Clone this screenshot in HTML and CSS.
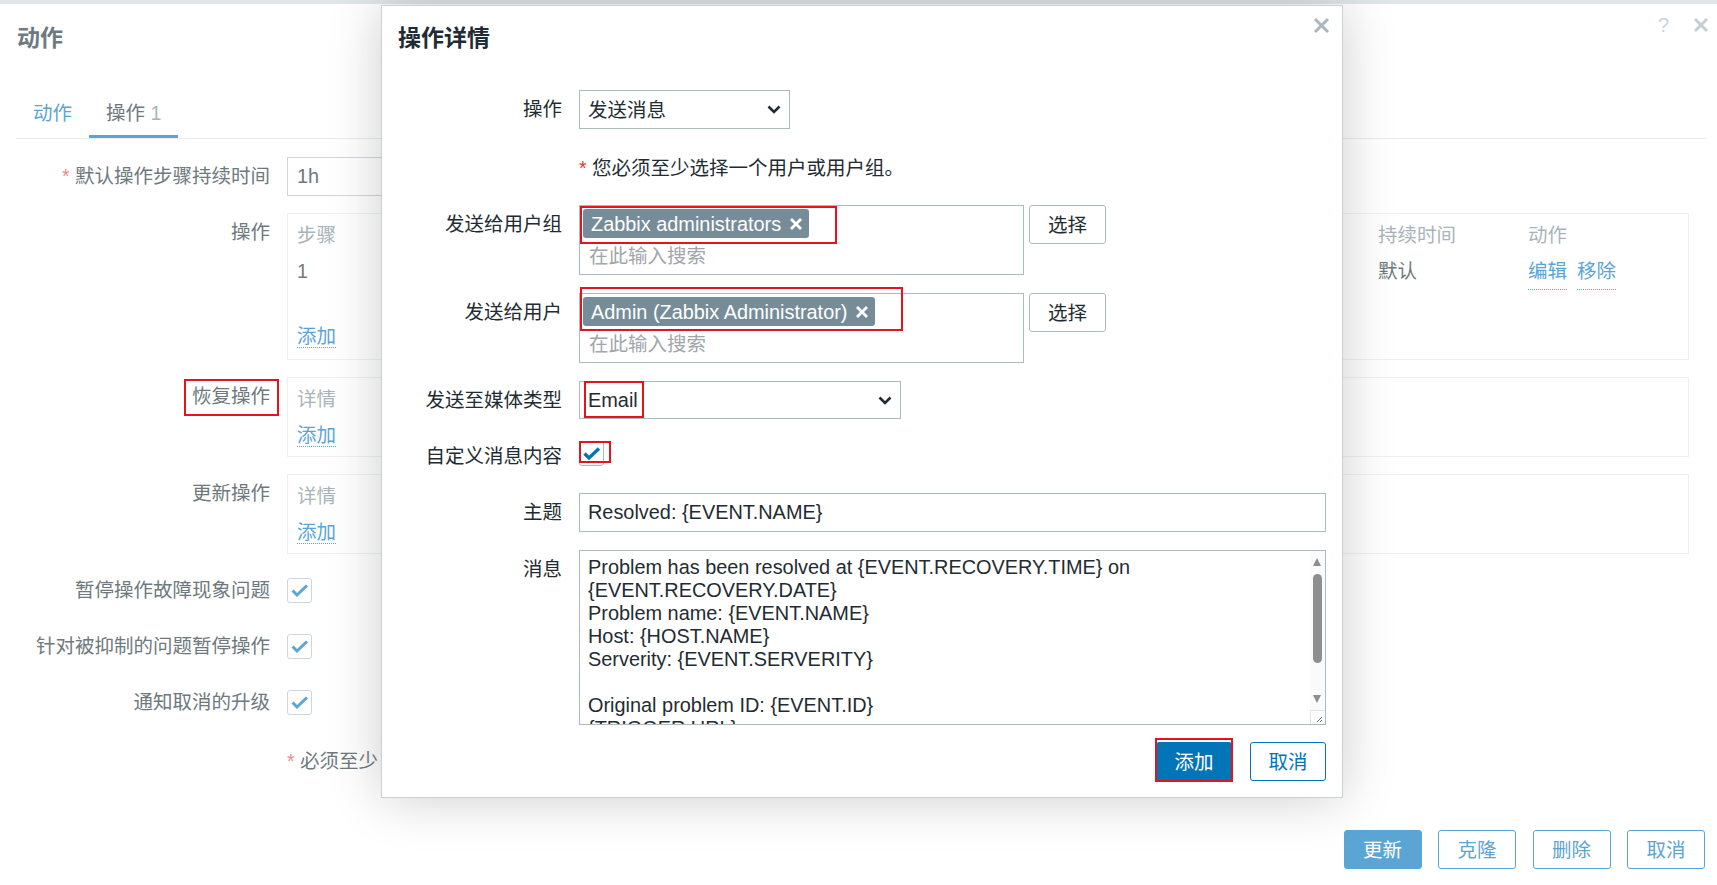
FILE: index.html
```html
<!DOCTYPE html>
<html lang="zh-CN">
<head>
  <meta charset="UTF-8">
  <title>动作</title>
  <link rel="stylesheet" href="styles.css">
</head>
<body>

  <div class="topbar"></div>

  <!-- action edit page (under the popup) -->
  <div class="page">
    <div class="page-head">
      <h1>动作</h1>
      <div class="head-icons">
        <span class="help">?</span>
        <svg class="head-close" viewBox="0 0 16 16"><path d="M2 2L14 14M14 2L2 14" /></svg>
      </div>
    </div>

    <ul class="tabs">
      <li class="tab">动作</li>
      <li class="tab active">操作 <span class="count">1</span></li>
    </ul>

    <div class="form">
      <label class="lbl"><span class="req">*</span> 默认操作步骤持续时间</label>
      <div class="fld"><div class="text-in">1h</div></div>

      <label class="lbl">操作</label>
      <div class="fld">
        <div class="op-box op-main">
          <div class="op-grid">
            <span class="th">步骤</span><span></span><span></span><span class="th">持续时间</span><span class="th">动作</span>
            <span>1</span><span></span><span></span><span>默认</span>
            <span class="links"><a class="link">编辑</a><a class="link">移除</a></span>
          </div>
          <div class="add-row"><a class="link">添加</a></div>
        </div>
      </div>

      <label class="lbl"><span class="marked">恢复操作<span class="mark mark-recovery"></span></span></label>
      <div class="fld">
        <div class="op-box">
          <div class="th-row"><span class="th">详情</span></div>
          <div><a class="link">添加</a></div>
        </div>
      </div>

      <label class="lbl">更新操作</label>
      <div class="fld">
        <div class="op-box">
          <div class="th-row"><span class="th">详情</span></div>
          <div><a class="link">添加</a></div>
        </div>
      </div>

      <label class="lbl cb-lbl">暂停操作故障现象问题</label>
      <div class="fld cb-row">
        <span class="cb"><svg viewBox="0 0 25 25"><polyline points="5.5,12.5 10,17 20,7.5" /></svg></span>
      </div>

      <label class="lbl cb-lbl">针对被抑制的问题暂停操作</label>
      <div class="fld cb-row">
        <span class="cb"><svg viewBox="0 0 25 25"><polyline points="5.5,12.5 10,17 20,7.5" /></svg></span>
      </div>

      <label class="lbl cb-lbl">通知取消的升级</label>
      <div class="fld cb-row">
        <span class="cb"><svg viewBox="0 0 25 25"><polyline points="5.5,12.5 10,17 20,7.5" /></svg></span>
      </div>

      <div></div>
      <div class="note"><span class="req">*</span> 必须至少</div>
    </div>

    <div class="page-actions">
      <button class="pbtn primary">更新</button>
      <button class="pbtn">克隆</button>
      <button class="pbtn">删除</button>
      <button class="pbtn">取消</button>
    </div>
  </div>

  <!-- operation details popup -->
  <div class="dialog">
    <div class="dlg-head">
      <h2>操作详情</h2>
      <svg class="dlg-close" viewBox="0 0 17 17"><path d="M2 2L15 15M15 2L2 15" /></svg>
    </div>

    <div class="dlg-body">
      <label class="dl">操作</label>
      <div class="select sel-op">
        <span>发送消息</span>
        <svg class="chev" viewBox="0 0 14 9"><polyline points="1.5,1.5 7,7 12.5,1.5" /></svg>
      </div>

      <div></div>
      <div class="hint"><span class="req">*</span> 您必须至少选择一个用户或用户组。</div>

      <label class="dl">发送给用户组</label>
      <div class="ms-row">
        <div class="ms">
          <div class="ms-tags">
            <span class="tag">Zabbix administrators
              <svg viewBox="0 0 14 14"><path d="M2 2L12 12M12 2L2 12" /></svg>
              <span class="mark mark-group"></span>
            </span>
          </div>
          <div class="ms-input">在此输入搜索</div>
        </div>
        <button class="btn-alt">选择</button>
      </div>

      <label class="dl">发送给用户</label>
      <div class="ms-row">
        <div class="ms">
          <div class="ms-tags">
            <span class="tag">Admin (Zabbix Administrator)
              <svg viewBox="0 0 14 14"><path d="M2 2L12 12M12 2L2 12" /></svg>
              <span class="mark mark-user"></span>
            </span>
          </div>
          <div class="ms-input">在此输入搜索</div>
        </div>
        <button class="btn-alt">选择</button>
      </div>

      <label class="dl">发送至媒体类型</label>
      <div class="select sel-media">
        <span class="en">Email</span>
        <svg class="chev" viewBox="0 0 14 9"><polyline points="1.5,1.5 7,7 12.5,1.5" /></svg>
        <span class="mark mark-media"></span>
      </div>

      <label class="dl">自定义消息内容</label>
      <div class="dlg-cb-row">
        <span class="cb dlg-cb">
          <svg viewBox="0 0 25 25"><polyline points="5.5,12.5 10,17 20,7.5" /></svg>
          <span class="mark mark-cb"></span>
        </span>
      </div>

      <label class="dl">主题</label>
      <div class="input">Resolved: {EVENT.NAME}</div>

      <label class="dl">消息</label>
      <div class="textarea">
<pre>Problem has been resolved at {EVENT.RECOVERY.TIME} on
{EVENT.RECOVERY.DATE}
Problem name: {EVENT.NAME}
Host: {HOST.NAME}
Serverity: {EVENT.SERVERITY}

Original problem ID: {EVENT.ID}
{TRIGGER.URL}</pre>
        <div class="sb">
          <span class="sb-up"></span>
          <span class="sb-thumb"></span>
          <span class="sb-down"></span>
          <span class="grip"><svg viewBox="0 0 14 13"><path d="M11 6L6 11M11 9L9 11" /></svg></span>
        </div>
      </div>
    </div>

    <div class="dlg-foot">
      <button class="btn primary">添加<span class="mark mark-add"></span></button>
      <button class="btn">取消</button>
    </div>
  </div>

</body>
</html>
```

FILE: styles.css
```css
/* base */
* { box-sizing: border-box; }
html, body { margin: 0; padding: 0; }
body {
  width: 1717px; height: 885px; overflow: hidden; position: relative;
  background: #fff;
  font-family: "Liberation Sans", "Noto Sans CJK SC", sans-serif;
  font-size: 19.5px; line-height: 24px;
  color: #6e797e;
}
button { font: inherit; cursor: pointer; }
pre { margin: 0; }

.topbar { height: 4px; background: #e0e5e8; }

/* page under the popup (dimmed colours) */
.page { padding: 0 11px 0 16px; }
.page-head { display: flex; justify-content: space-between; align-items: flex-start; padding-top: 13px; }
.page-head h1 { margin: 6px 0 0 1px; font-size: 23px; line-height: 30px; font-weight: bold; color: #6f7a80; }
.head-icons { display: flex; align-items: center; gap: 24px; margin-right: -3px; height: 16px; }
.help { font-size: 20px; line-height: 16px; color: #cbd3d7; }
.head-close { width: 16px; height: 16px; }
.head-close path { stroke: #c6cfd4; stroke-width: 3; }

.tabs { list-style: none; margin: 48px 0 0; padding: 0; display: flex; border-bottom: 1px solid #e9edef; }
.tab { padding: 0 17px 10px; border-bottom: 3px solid transparent; color: #5ba5d4; }
.tab.active { color: #6e797e; border-bottom-color: #5ba5d4; }
.tab .count { color: #aab3b8; }

.form {
  margin-top: 18px;
  display: grid; grid-template-columns: 254px 1402px;
  column-gap: 17px; row-gap: 17px;
}
.lbl { text-align: right; padding-top: 7px; }
.req { color: #f08a8a; }
.text-in { width: 330px; height: 39px; border: 1px solid #cdd6db; padding-left: 9px; line-height: 37px; font-size: 19.9px; }

.op-box { border: 1px solid #eef1f3; padding: 3px 9px; line-height: 36px; }
.op-main { padding-bottom: 5px; }
.op-grid { display: grid; grid-template-columns: 81px 700px 300px 150px auto; white-space: nowrap; }
.op-main .add-row { margin-top: 28px; }
.th { color: #a9b4ba; }
.links { display: flex; gap: 10px; }
.link { color: #5ba5d4; border-bottom: 1px dotted #5ba5d4; }

.marked { position: relative; display: inline-block; }

.cb-row { min-height: 39px; }
.cb {
  display: inline-block; position: relative;
  width: 25px; height: 25px; margin-top: 7px;
  border: 1px solid #cdd6db; border-radius: 3px; background: #fff;
}
.cb svg { position: absolute; left: -1px; top: -1px; width: 25px; height: 25px; }
.cb polyline { fill: none; stroke: #5ba5d4; stroke-width: 3; }

.note { padding-top: 10px; min-height: 39px; white-space: nowrap; }

.page-actions { display: flex; justify-content: flex-end; gap: 16.5px; margin: 52px 1px 0 0; }
.pbtn {
  width: 78px; height: 39px; padding: 0;
  background: #fff; color: #5ba5d4;
  border: 1px solid #5ba5d4; border-radius: 3px;
}
.pbtn.primary { background: #5ba5d4; color: #fff; }

/* popup window */
.dialog {
  position: absolute; left: 381px; top: 5px; width: 962px;
  background: #fff; color: #1f2c33;
  border: 1px solid #c9d1d5;
  box-shadow: 0 0 50px rgba(0, 0, 0, 0.2);
}
.dlg-head { position: relative; padding: 17px 16px 0; }
.dlg-head h2 { margin: 0; font-size: 23px; line-height: 30px; font-weight: bold; }
.dlg-close { position: absolute; top: 11px; right: 12px; width: 17px; height: 17px; }
.dlg-close path { stroke: #aab7bf; stroke-width: 3; }

.dlg-body {
  display: grid; grid-template-columns: 164px 747px;
  column-gap: 17px; row-gap: 18px;
  padding: 37px 16px 0;
}
.dl { text-align: right; padding-top: 7px; }
.dialog .req { color: #e33734; }
.hint { padding: 9px 0 7px; }

.select {
  position: relative;
  display: flex; align-items: center; justify-content: space-between;
  height: 39px; border: 1px solid #acbbc2; padding: 0 8px 0 8px;
}
.sel-op { width: 211px; }
.sel-media { width: 322px; height: 38px; }
.en { font-size: 19.9px; }
.chev { width: 14px; height: 9px; }
.chev polyline { fill: none; stroke: #1f2c33; stroke-width: 2.6; }

.ms-row { display: flex; align-items: flex-start; gap: 5px; }
.ms { width: 445px; height: 70px; border: 1px solid #acbbc2; padding: 3px; }
.ms-tags { display: flex; height: 29px; }
.tag {
  position: relative;
  display: inline-flex; align-items: center; gap: 8px;
  height: 29px; padding: 0 6px 0 8px; line-height: 22px;
  background: #768d99; color: #fff; border-radius: 3px;
  font-size: 19.9px; white-space: nowrap;
}
.tag svg { width: 14px; height: 14px; }
.tag path { stroke: #fff; stroke-width: 2.8; }
.ms-input { margin-top: 2px; height: 32px; line-height: 32px; padding-left: 6px; color: #a0a6aa; }
.btn-alt {
  width: 77px; height: 39px; padding: 0;
  background: #fff; color: #1f2c33;
  border: 1px solid #acbbc2; border-radius: 3px;
}

.dlg-cb-row { height: 38px; }
.dlg-cb { margin-top: 4px; border-color: #acbbc2; }
.dlg-cb polyline { stroke: #0275b8; stroke-width: 3.4; }

.input { height: 39px; border: 1px solid #acbbc2; padding-left: 8px; line-height: 37px; font-size: 19.9px; }

.textarea { position: relative; height: 175px; border: 1px solid #acbbc2; overflow: hidden; }
.textarea pre { font: inherit; font-size: 19.9px; line-height: 23px; padding: 5px 24px 0 8px; color: #1f2c33; }
.sb { position: absolute; top: 0; right: 0; bottom: 0; width: 15px; background: #fafafa; }
.sb-up, .sb-down {
  position: absolute; left: 3px; width: 0; height: 0;
  border-left: 4.5px solid transparent; border-right: 4.5px solid transparent;
}
.sb-up { top: 7px; border-bottom: 8px solid #8d8d8d; }
.sb-down { top: 144px; border-top: 8px solid #8d8d8d; }
.sb-thumb { position: absolute; top: 23px; left: 3px; width: 9px; height: 89px; border-radius: 5px; background: #8e8e8e; }
.grip {
  position: absolute; right: 0; bottom: 0; width: 15px; height: 14px;
  background: #fff; border-left: 1px solid #e2e2e2; border-top: 1px solid #e2e2e2;
}
.grip svg { display: block; width: 14px; height: 13px; }
.grip path { stroke: #777; stroke-width: 1; fill: none; }

.dlg-foot { display: flex; justify-content: flex-end; gap: 18px; padding: 17px 16px 16px; }
.btn {
  position: relative;
  width: 76px; height: 39px; padding: 0;
  background: #fff; color: #0275b8;
  border: 1px solid #0275b8; border-radius: 3px;
}
.btn.primary { background: #0275b8; color: #fff; }

/* red highlight frames */
.mark { position: absolute; border: 2px solid #e3141b; pointer-events: none; }
.mark-recovery { top: -5px; right: -9px; bottom: -8px; left: -8px; }
.mark-group { top: -3px; right: -28px; bottom: -6px; left: -3px; }
.mark-user { top: -10px; right: -28px; bottom: -5px; left: -3px; }
.mark-media { top: -1px; left: 4px; width: 60px; height: 37px; }
.mark-cb { top: -1px; right: -8px; bottom: 2px; left: -1px; }
.mark-add { top: -5px; right: -2px; bottom: -2px; left: -2px; }
```
